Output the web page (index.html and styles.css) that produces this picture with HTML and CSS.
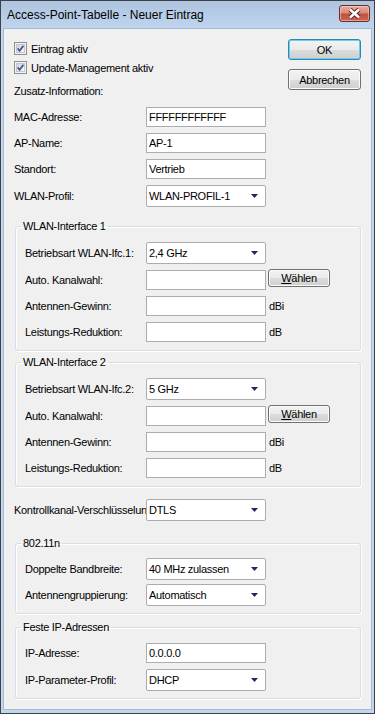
FILE: index.html
```html
<!DOCTYPE html>
<html lang="de">
<head>
  <meta charset="UTF-8">
  <meta name="viewport" content="width=device-width, initial-scale=1.0">
  <title>Access-Point-Tabelle - Neuer Eintrag</title>
  <link rel="stylesheet" href="styles.css">
</head>
<body>
  <div class="window">
    <div class="titlebar">
      <span class="title">Access-Point-Tabelle - Neuer Eintrag</span>
      <button class="close" type="button" aria-label="Schließen">
        <svg width="13" height="11" viewBox="0 0 13 11">
          <path d="M2 1.5 L11 9.5 M11 1.5 L2 9.5" stroke="#5a2720" stroke-width="4.4" fill="none"/>
          <path d="M2 1.5 L11 9.5 M11 1.5 L2 9.5" stroke="#ffffff" stroke-width="2.4" fill="none"/>
        </svg>
      </button>
    </div>

    <div class="client">
      <div class="head">
        <div class="checks">
          <label class="check">
            <span class="box"><svg width="7" height="7" viewBox="0 0 7 7"><path d="M0.6 3.4 L2.6 5.8 L6.4 0.8" stroke="#3a55a0" stroke-width="1.7" fill="none"/></svg></span>
            Eintrag aktiv
          </label>
          <label class="check">
            <span class="box"><svg width="7" height="7" viewBox="0 0 7 7"><path d="M0.6 3.4 L2.6 5.8 L6.4 0.8" stroke="#3a55a0" stroke-width="1.7" fill="none"/></svg></span>
            Update-Management aktiv
          </label>
          <div class="note">Zusatz-Information:</div>
        </div>
        <div class="buttons">
          <button class="btn default" type="button">OK</button>
          <button class="btn" type="button">Abbrechen</button>
        </div>
      </div>

      <div class="stack fields">
        <div class="row"><span class="lbl">MAC-Adresse:</span><input class="edit" type="text" value="FFFFFFFFFFFF"></div>
        <div class="row"><span class="lbl">AP-Name:</span><input class="edit" type="text" value="AP-1"></div>
        <div class="row"><span class="lbl">Standort:</span><input class="edit" type="text" value="Vertrieb"></div>
        <div class="row tall"><span class="lbl">WLAN-Profil:</span><div class="combo"><span>WLAN-PROFIL-1</span><svg width="7" height="4" viewBox="0 0 7 4"><path d="M0 0 H7 L3.5 4 Z" fill="#1e2a5e"/></svg></div></div>
      </div>

      <fieldset class="group g1">
        <legend>WLAN-Interface 1</legend>
        <div class="stack">
          <div class="row tall"><span class="lbl">Betriebsart WLAN-Ifc.1:</span><div class="combo"><span>2,4 GHz</span><svg width="7" height="4" viewBox="0 0 7 4"><path d="M0 0 H7 L3.5 4 Z" fill="#1e2a5e"/></svg></div></div>
          <div class="row"><span class="lbl">Auto. Kanalwahl:</span><input class="edit" type="text" value=""><button class="btn pick" type="button"><u>W</u>ählen</button></div>
          <div class="row"><span class="lbl">Antennen-Gewinn:</span><input class="edit" type="text" value=""><span class="unit">dBi</span></div>
          <div class="row"><span class="lbl">Leistungs-Reduktion:</span><input class="edit" type="text" value=""><span class="unit">dB</span></div>
        </div>
      </fieldset>

      <fieldset class="group g2">
        <legend>WLAN-Interface 2</legend>
        <div class="stack">
          <div class="row tall"><span class="lbl">Betriebsart WLAN-Ifc.2:</span><div class="combo"><span>5 GHz</span><svg width="7" height="4" viewBox="0 0 7 4"><path d="M0 0 H7 L3.5 4 Z" fill="#1e2a5e"/></svg></div></div>
          <div class="row"><span class="lbl">Auto. Kanalwahl:</span><input class="edit" type="text" value=""><button class="btn pick" type="button"><u>W</u>ählen</button></div>
          <div class="row"><span class="lbl">Antennen-Gewinn:</span><input class="edit" type="text" value=""><span class="unit">dBi</span></div>
          <div class="row"><span class="lbl">Leistungs-Reduktion:</span><input class="edit" type="text" value=""><span class="unit">dB</span></div>
        </div>
      </fieldset>

      <div class="row tall ctrl"><span class="lbl">Kontrollkanal-Verschlüsselung:</span><div class="combo"><span>DTLS</span><svg width="7" height="4" viewBox="0 0 7 4"><path d="M0 0 H7 L3.5 4 Z" fill="#1e2a5e"/></svg></div></div>

      <fieldset class="group g3">
        <legend>802.11n</legend>
        <div class="stack">
          <div class="row tall"><span class="lbl">Doppelte Bandbreite:</span><div class="combo"><span>40 MHz zulassen</span><svg width="7" height="4" viewBox="0 0 7 4"><path d="M0 0 H7 L3.5 4 Z" fill="#1e2a5e"/></svg></div></div>
          <div class="row tall"><span class="lbl">Antennengruppierung:</span><div class="combo"><span>Automatisch</span><svg width="7" height="4" viewBox="0 0 7 4"><path d="M0 0 H7 L3.5 4 Z" fill="#1e2a5e"/></svg></div></div>
        </div>
      </fieldset>

      <fieldset class="group g4">
        <legend>Feste IP-Adressen</legend>
        <div class="stack">
          <div class="row"><span class="lbl">IP-Adresse:</span><input class="edit" type="text" value="0.0.0.0"></div>
          <div class="row tall"><span class="lbl">IP-Parameter-Profil:</span><div class="combo"><span>DHCP</span><svg width="7" height="4" viewBox="0 0 7 4"><path d="M0 0 H7 L3.5 4 Z" fill="#1e2a5e"/></svg></div></div>
        </div>
      </fieldset>
    </div>
  </div>
</body>
</html>
```

FILE: styles.css
```css
* {
  box-sizing: border-box;
}
body {
  margin: 0;
  font-family: "Liberation Sans", Arial, sans-serif;
  font-size: 11px;
  letter-spacing: -0.3px;
  color: #000;
  background: #f0f0f0;
}
.window {
  width: 375px;
  height: 714px;
  border: 1px solid #3e4247;
  background: #c2d6ee;
  display: flex;
  flex-direction: column;
}
.titlebar {
  height: 27px;
  flex: none;
  display: flex;
  align-items: center;
  justify-content: space-between;
  padding: 0 4px 0 6px;
  background: linear-gradient(#aec4df, #bfd4ed);
}
.title {
  font-size: 12px;
  letter-spacing: 0;
  margin-top: 1px;
}
.close {
  align-self: flex-start;
  margin-top: 4px;
  width: 31px;
  height: 17px;
  padding: 0;
  border: 1px solid #6b2c25;
  border-radius: 3px;
  background: linear-gradient(#e8ad9f, #d9897a 45%, #c4503f 55%, #cc6353);
  box-shadow: inset 0 0 0 1px rgba(255, 220, 210, 0.5);
  display: flex;
  align-items: center;
  justify-content: center;
}
.client {
  flex: 1;
  margin: 0 2px 3px;
  border: 1px solid #a6bbd4;
  background: #f0f0f0;
  padding: 10px 10px 0;
}

/* obere Zeile: Optionen und Knöpfe */
.head {
  display: flex;
  justify-content: space-between;
}
.check {
  display: flex;
  align-items: center;
  height: 19px;
}
.box {
  width: 13px;
  height: 13px;
  margin-right: 4px;
  border: 1px solid #8e8f8f;
  padding: 2px;
  background: #f4f4f4;
  display: flex;
}
.box svg {
  width: 7px;
  height: 7px;
  background: linear-gradient(135deg, #d2d4d8, #f7f7f7);
  outline: 1px solid #c4c6ca;
}
.note {
  margin-top: 5px;
  height: 18px;
  line-height: 18px;
}
.buttons {
  display: flex;
  flex-direction: column;
  gap: 9px;
}
.btn {
  width: 73px;
  height: 21px;
  padding: 0;
  font: inherit;
  letter-spacing: inherit;
  color: #000;
  border: 1px solid #707070;
  border-radius: 3px;
  background: linear-gradient(#f2f2f2, #ebebeb 50%, #dddddd 51%, #cfcfcf);
  box-shadow: inset 0 0 0 1px #fcfcfc;
}
.btn.default {
  border-color: #3c7fb1;
  box-shadow: inset 0 0 0 1px #5fd3f6;
}
.btn.pick {
  width: 62px;
  height: 18px;
  margin-left: 2px;
  align-self: flex-start;
  margin-top: -1px;
}
.btn u {
  text-decoration: underline;
}

/* Zeilen */
.stack {
  display: flex;
  flex-direction: column;
  gap: 6px;
}
.fields {
  margin-top: 7px;
}
.row {
  display: flex;
  align-items: center;
  height: 20px;
}
.row.tall {
  height: 22px;
}
.lbl {
  width: 132px;
  flex: none;
  white-space: nowrap;
  overflow: hidden;
}
.group .lbl {
  width: 121px;
}
.edit {
  width: 120px;
  height: 20px;
  margin: 0;
  padding: 0 2px;
  font: inherit;
  letter-spacing: inherit;
  color: #000;
  background: #fff;
  border: 1px solid #abadb3;
}
.combo {
  width: 120px;
  height: 22px;
  padding: 0 7px 0 2px;
  background: #fff;
  border: 1px solid #acacac;
  border-radius: 2px;
  display: flex;
  align-items: center;
  justify-content: space-between;
}
.unit {
  margin-left: 3px;
}
.ctrl {
  margin-top: 12px;
}

/* Gruppenrahmen */
.group {
  margin: 0 0 0 1px;
  padding: 9px 8px 8px 9px;
  min-width: 0;
  border: 1px solid #d5dfe5;
  border-radius: 3px;
  box-shadow: inset 1px 1px 0 #fff, 1px 1px 0 #fff;
}
.group legend {
  margin-left: -4px;
  padding: 0 2px;
  line-height: 14px;
  font-size: 11px;
}
.g1 {
  margin-top: 12px;
}
.g2 {
  margin-top: 4px;
}
.g3 {
  margin-top: 15px;
  padding-top: 8px;
  padding-bottom: 7px;
}
.g3 .stack {
  gap: 4px;
}
.g4 {
  margin-top: 6px;
  padding-bottom: 7px;
}
```
